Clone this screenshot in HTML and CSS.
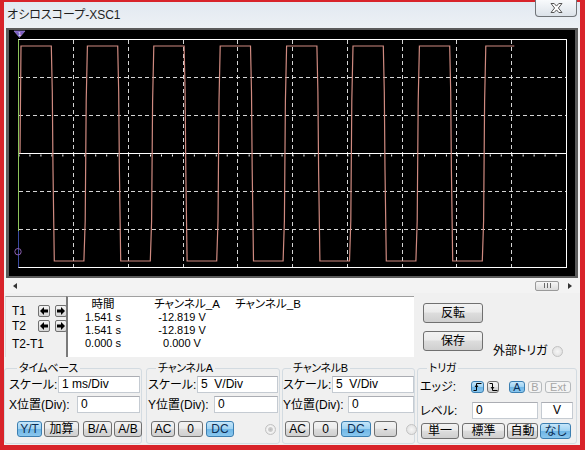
FILE: index.html
```html
<!DOCTYPE html>
<html lang="ja">

<head>
    <meta charset="UTF-8">
    <title>オシロスコープ-XSC1</title>
    <link rel="stylesheet" href="styles.css">
</head>

<body>
    <div class="window">
        <!-- タイトルバー -->
        <div class="titlebar">
            <span class="title">オシロスコープ-XSC1</span>
            <span class="close-btn">
                <svg width="13" height="10" viewBox="0 0 13 10">
                    <path d="M1 .5h3.2l2.3 2.6 2.3-2.6H12L8.4 5 12 9.5H8.8L6.5 6.9 4.2 9.5H1L4.6 5Z" fill="#fff" stroke="#555" stroke-width="1" stroke-linejoin="round"/>
                </svg>
            </span>
        </div>

        <div class="client">
            <!-- 画面 -->
            <div class="screen">
                <svg class="scope" width="566" height="246" viewBox="0 0 566 246">
                    <g stroke="#d4d4d4" stroke-width="1" stroke-dasharray="4 3" fill="none">
                        <path d="M64.5 10V237M119.5 10V237M174.5 10V237M228.5 10V237M283.5 10V237M338.5 10V237M393.5 10V237M447.5 10V237M502.5 10V237"/>
                        <path d="M10 47.5H557M10 85.5H557M10 161.5H557M10 199.5H557"/>
                    </g>
                    <path d="M9.5 123.5H557.5" stroke="#fff" stroke-width="1.2"/>
                    <path d="M9.5 125.5H557.5" stroke="#fff" stroke-width="2" stroke-dasharray="1 9.96"/>
                    <rect x="9.5" y="9.5" width="548" height="228" fill="none" stroke="#fff"/>
                    <path fill="none" stroke="#cf8a80" stroke-width="1.2"
                        d="M11 123.5L12 16
                           h30.3l1 46l.7 78l1.3 91h29.6l1.3-40l1-120l1.2-55
                           h30.3l1 46l.7 78l1.3 91h29.6l1.3-40l1-120l1.2-55
                           h30.3l1 46l.7 78l1.3 91h29.6l1.3-40l1-120l1.2-55
                           h30.3l1 46l.7 78l1.3 91h29.6l1.3-40l1-120l1.2-55
                           h30.3l1 46l.7 78l1.3 91h29.6l1.3-40l1-120l1.2-55
                           h30.3l1 46l.7 78l1.3 91h29.6l1.3-40l1-120l1.2-55
                           h30.3l1 46l.7 78l1.3 91h29.6l1.3-40l1-120l1.2-55
                           h28.5"/>
                    <path d="M9.5 9.5V201" stroke="#8cc45a"/>
                    <path d="M9.5 201V237.5" stroke="#3a4aa0"/>
                    <circle cx="9" cy="221.7" r="3.2" fill="none" stroke="#8a5fb0"/>
                    <polygon points="5,1 16,1 10.5,7.5" fill="#7a5cc0" stroke="#a890e0" stroke-width=".6"/>
                    <text x="10.5" y="5.6" font-size="5" fill="#fff" text-anchor="middle" font-family="DejaVu Sans, sans-serif">1</text>
                </svg>
            </div>

            <!-- スクロールバー -->
            <div class="hscroll">
                <span class="arrow-left"></span>
                <span class="thumb">
                    <svg width="9" height="5" viewBox="0 0 9 5">
                        <path d="M1.5 0V5M4.5 0V5M7.5 0V5" stroke="#6a6a6a"/>
                    </svg>
                </span>
                <span class="arrow-right"></span>
            </div>

            <!-- カーソル読み取り -->
            <div class="readout-row">
                <div class="cursors">
                    <span class="t-label">T1</span>
                    <span class="arr"><svg width="8" height="8" viewBox="0 0 8 8"><path d="M0 4L4 0V2.5H8V5.5H4V8Z"/></svg></span>
                    <span class="arr"><svg width="8" height="8" viewBox="0 0 8 8"><path d="M8 4L4 0V2.5H0V5.5H4V8Z"/></svg></span>
                    <span class="t-label">T2</span>
                    <span class="arr"><svg width="8" height="8" viewBox="0 0 8 8"><path d="M0 4L4 0V2.5H8V5.5H4V8Z"/></svg></span>
                    <span class="arr"><svg width="8" height="8" viewBox="0 0 8 8"><path d="M8 4L4 0V2.5H0V5.5H4V8Z"/></svg></span>
                    <span class="t-label t-diff">T2-T1</span>
                </div>

                <div class="readout">
                    <span class="hd">時間</span>
                    <span class="hd hd-a">チャンネル_A</span>
                    <span class="hd">チャンネル_B</span>

                    <span>1.541 s</span>
                    <span>-12.819 V</span>
                    <span></span>

                    <span>1.541 s</span>
                    <span>-12.819 V</span>
                    <span></span>

                    <span>0.000 s</span>
                    <span>0.000 V</span>
                    <span></span>
                </div>

                <div class="actions">
                    <button class="big-btn">反転</button>
                    <button class="big-btn">保存</button>
                </div>

                <div class="ext-trigger">
                    <span>外部トリガ</span>
                    <span class="radio"></span>
                </div>
            </div>

            <!-- 設定グループ -->
            <div class="groups">
                <fieldset class="grp grp-time">
                    <legend>タイムベース</legend>
                    <div class="field">
                        <span class="lbl">スケール:</span>
                        <span class="input">1 ms/Div</span>
                    </div>
                    <div class="field field-2">
                        <span class="lbl lbl-wide">X位置(Div):</span>
                        <span class="input">0</span>
                    </div>
                    <div class="btn-row">
                        <span class="btn on w25">Y/T</span>
                        <span class="btn w35">加算</span>
                        <span class="btn w29 push">B/A</span>
                        <span class="btn w28">A/B</span>
                    </div>
                </fieldset>

                <fieldset class="grp grp-cha">
                    <legend>チャンネルA</legend>
                    <div class="field">
                        <span class="lbl">スケール:</span>
                        <span class="input">5&nbsp;&nbsp;V/Div</span>
                    </div>
                    <div class="field field-2">
                        <span class="lbl lbl-y">Y位置(Div):</span>
                        <span class="input">0</span>
                    </div>
                    <div class="btn-row gap3">
                        <span class="btn w24">AC</span>
                        <span class="btn w25">0</span>
                        <span class="btn on w28">DC</span>
                        <span class="radio radio-dot radio-a"></span>
                    </div>
                </fieldset>

                <fieldset class="grp grp-chb">
                    <legend>チャンネルB</legend>
                    <div class="field">
                        <span class="lbl">スケール:</span>
                        <span class="input">5&nbsp;&nbsp;V/Div</span>
                    </div>
                    <div class="field field-2">
                        <span class="lbl lbl-y">Y位置(Div):</span>
                        <span class="input">0</span>
                    </div>
                    <div class="btn-row gap3">
                        <span class="btn w25">AC</span>
                        <span class="btn w25">0</span>
                        <span class="btn on w30">DC</span>
                        <span class="btn w23">-</span>
                        <span class="radio radio-b"></span>
                    </div>
                </fieldset>

                <fieldset class="grp grp-trig">
                    <legend>トリガ</legend>
                    <div class="trig-row">
                        <span class="lbl lbl-edge">エッジ:</span>
                        <span class="sbtn on w13">
                            <svg width="9" height="8" viewBox="0 0 9 8"><path d="M.5 7.5h3v-7h5M2 4l1.5-2L5 4" fill="none" stroke="#000"/></svg>
                        </span>
                        <span class="sbtn w12">
                            <svg width="9" height="8" viewBox="0 0 9 8"><path d="M.5 .5h3v7h5M2 4l1.5 2L5 4" fill="none" stroke="#000"/></svg>
                        </span>
                        <span class="sbtn on w16 gap-a">A</span>
                        <span class="sbtn off w14">B</span>
                        <span class="sbtn off w26">Ext</span>
                    </div>
                    <div class="trig-row level-row">
                        <span class="lbl lbl-level">レベル:</span>
                        <span class="input lv-input">0</span>
                        <span class="input unit">V</span>
                    </div>
                    <div class="btn-row trig-btns">
                        <span class="btn w38">単一</span>
                        <span class="btn w43">標準</span>
                        <span class="btn w31">自動</span>
                        <span class="btn on w31">なし</span>
                    </div>
                </fieldset>
            </div>
        </div>
    </div>
</body>

</html>
```

FILE: styles.css
```css
/* 全体 */
* {
    box-sizing: border-box;
}

body {
    margin: 0;
    width: 585px;
    height: 450px;
    font-family: "Liberation Sans", "Noto Sans CJK JP", sans-serif;
    font-size: 12px;
    font-feature-settings: "palt" 1;
    color: #000;
    background: #fff;
}

/* ウィンドウ枠 */
.window {
    width: 585px;
    height: 450px;
    border-style: solid;
    border-color: #d8232a;
    border-width: 2px 5px 5px 4px;
    background: #f0f0f0;
    display: flex;
    flex-direction: column;
}

.titlebar {
    height: 26px;
    flex: none;
    display: flex;
    justify-content: space-between;
    align-items: flex-start;
    background: linear-gradient(#e2e9f1, #edf1f5);
}

.title {
    padding: 6px 0 0 3px;
    line-height: 14px;
    color: #1e1e1e;
}

.close-btn {
    width: 42px;
    height: 17px;
    margin: -2px 3px 0 0;
    display: flex;
    align-items: center;
    justify-content: center;
    border: 1px solid #707478;
    border-top: none;
    border-radius: 0 0 4px 4px;
    background: linear-gradient(#f8fafc, #dce2e9);
}

.client {
    flex: 1;
    display: flex;
    flex-direction: column;
}

/* 画面 */
.screen {
    height: 250px;
    margin: 0 2px;
    border: 3px solid #5b5b5b;
    border-top-width: 2px;
    border-bottom-width: 2px;
    background: #000;
}

.scope {
    display: block;
}

/* スクロールバー */
.hscroll {
    height: 15px;
    display: flex;
    align-items: center;
    background: #f3f3f3;
}

.arrow-left {
    width: 0;
    height: 0;
    margin-left: 9px;
    border-right: 4px solid #333;
    border-top: 3px solid transparent;
    border-bottom: 3px solid transparent;
}

.thumb {
    width: 24px;
    height: 10px;
    margin-left: auto;
    display: flex;
    align-items: center;
    justify-content: center;
    border: 1px solid #9a9a9a;
    border-radius: 2px;
    background: linear-gradient(#f6f6f6, #dcdcdc);
}

.arrow-right {
    width: 0;
    height: 0;
    margin: 0 8px 0 9px;
    border-left: 4px solid #333;
    border-top: 3px solid transparent;
    border-bottom: 3px solid transparent;
}

/* カーソル読み取り */
.readout-row {
    height: 64px;
    display: flex;
    align-items: flex-start;
}

.cursors {
    width: 61px;
    height: 61px;
    margin: 3px 0 0 1px;
    padding: 8px 0 0 6px;
    border-top: 1px solid #a0a0a0;
    border-left: 1px solid #dcdcdc;
    display: grid;
    grid-template-columns: 21px 12px 12px;
    grid-template-rows: 12px 12px auto;
    column-gap: 5px;
    row-gap: 3px;
    align-items: center;
}

.t-label {
    line-height: 14px;
}

.t-diff {
    grid-column: 1 / 4;
    align-self: start;
    margin-top: 2px;
}

.arr {
    width: 12px;
    height: 12px;
    display: flex;
    align-items: center;
    justify-content: center;
    border: 1px solid #707070;
    border-radius: 2px;
    background: linear-gradient(#f4f4f4, #d6d6d6);
}

.readout {
    width: 348px;
    height: 61px;
    margin-top: 3px;
    padding-top: 1px;
    border-top: 1px solid #a0a0a0;
    border-left: 2px solid #7a7a7a;
    background: #fff;
    display: grid;
    grid-template-columns: 70px 88px 84px;
    grid-auto-rows: 13px;
    font-size: 11px;
    line-height: 13px;
    text-align: center;
}

.readout .hd {
    font-size: 11.5px;
}

.readout .hd-a {
    padding-left: 10px;
}

.actions {
    margin-left: 9px;
    padding-top: 10px;
    display: flex;
    flex-direction: column;
    gap: 8px;
}

.big-btn {
    width: 60px;
    height: 20px;
    padding: 0;
    font: inherit;
    line-height: 16px;
    color: #000;
    border: 1px solid #707070;
    border-radius: 3px;
    background: linear-gradient(#f2f2f2, #ebebeb 45%, #dddddd 50%, #cfcfcf);
}

.ext-trigger {
    align-self: flex-end;
    margin: 0 0 -1px 10px;
    display: flex;
    align-items: center;
    gap: 4px;
    line-height: 14px;
}

.radio {
    width: 11px;
    height: 11px;
    flex: none;
    border: 1px solid #c2c2c2;
    border-radius: 50%;
    background: radial-gradient(circle, #f6f6f6, #dcdcdc);
}

.radio-dot {
    background: radial-gradient(circle, #bdbdbd 0, #cfcfcf 2px, #f4f4f4 3px, #dcdcdc);
}

/* 設定グループ */
.groups {
    height: 83px;
    margin-top: 4px;
    display: flex;
}

.grp {
    margin: 0;
    padding: 0;
    min-width: 0;
    border: 1px solid #d3dbe1;
    border-radius: 3px;
}

.grp legend {
    margin-left: 8px;
    padding: 0 2px;
    font-size: 11px;
    letter-spacing: -0.3px;
    line-height: 14px;
}

.grp-time {
    width: 138px;
    padding: 0 1px 0 4px;
}

.grp-cha {
    width: 134px;
    margin-left: 4px;
    padding: 0 1px 0 1px;
}

.grp-chb {
    width: 133px;
    margin-left: 2px;
}

.grp-trig {
    width: 160px;
    margin-left: 2px;
    padding: 0 1px 0 1px;
}

.field {
    height: 17px;
    margin-top: 1px;
    display: flex;
    align-items: center;
}

.field-2 {
    margin-top: 3px;
}

.lbl {
    width: 49px;
    flex: none;
    line-height: 14px;
    white-space: nowrap;
}

.lbl-wide {
    width: 68px;
}

.lbl-y {
    width: 66px;
}

.grp-chb .lbl-y {
    width: 65px;
}

.input {
    flex: 1;
    height: 17px;
    padding-left: 3px;
    line-height: 15px;
    border: 1px solid #c5cbd2;
    border-top-color: #abadb3;
    background: #fff;
    white-space: nowrap;
}

.btn-row {
    margin-top: 8px;
    padding-left: 8px;
    display: flex;
    align-items: center;
    gap: 2px;
}

.grp-cha .btn-row {
    padding-left: 3px;
}

.grp-chb .btn-row {
    padding-left: 2px;
}

.gap3 {
    gap: 3px;
}

.btn,
.sbtn {
    height: 16px;
    flex: none;
    display: flex;
    align-items: center;
    justify-content: center;
    line-height: 14px;
    border: 1px solid #707070;
    border-radius: 3px;
    background: linear-gradient(#f2f2f2, #ebebeb 45%, #dddddd 50%, #cfcfcf);
}

.btn.on,
.sbtn.on {
    border-color: #3c7fb1;
    color: #0c2f55;
    background: linear-gradient(#c6e6fa, #9fd3f3 48%, #6fb6e6 52%, #8ac7ee);
}

.sbtn {
    height: 12px;
    font-size: 11px;
    line-height: 10px;
}

.sbtn.off {
    color: #a6a6a6;
    border-color: #b5b9bc;
    background: #f4f4f4;
}

.push {
    margin-left: 2px;
}

.radio-a {
    margin-left: 28px;
}

.radio-b {
    margin-left: 6px;
}

.w12 { width: 12px; }
.w13 { width: 13px; }
.w14 { width: 14px; }
.w16 { width: 16px; }
.w23 { width: 23px; }
.w24 { width: 24px; }
.w25 { width: 25px; }
.w26 { width: 26px; }
.w28 { width: 28px; }
.w29 { width: 29px; }
.w30 { width: 30px; }
.w31 { width: 31px; }
.w35 { width: 35px; }
.w38 { width: 38px; }
.w43 { width: 43px; }

/* トリガ */
.trig-row {
    margin-top: 5px;
    padding-left: 1px;
    display: flex;
    align-items: center;
    gap: 3px;
}

.lbl-edge {
    width: 48px;
}

.gap-a {
    margin-left: 7px;
}

.level-row {
    height: 17px;
    margin-top: 8px;
    gap: 0;
}

.lbl-level {
    width: 52px;
}

.lv-input {
    flex: none;
    width: 66px;
}

.unit {
    flex: none;
    width: 32px;
    margin-left: 3px;
    padding-left: 0;
    text-align: center;
}

.trig-btns {
    margin-top: 4px;
    padding-left: 2px;
}

.trig-btns .w43 {
    margin-left: 1px;
}
```
